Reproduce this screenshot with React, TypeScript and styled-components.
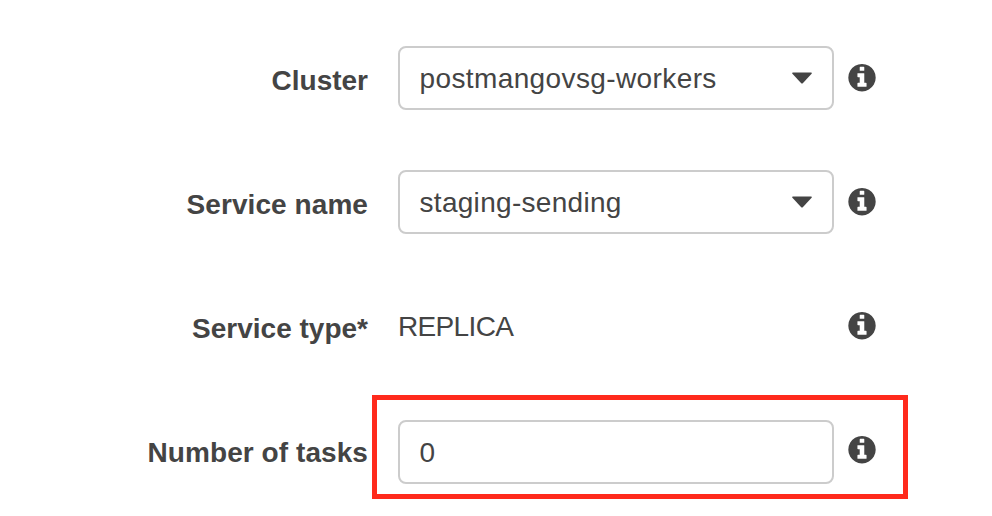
import React from "react";
import styled, { createGlobalStyle } from "styled-components";

const GlobalStyle = createGlobalStyle`
  *, *::before, *::after { box-sizing: border-box; }
  body { margin: 0; background: #fff; overflow: hidden; }
`;

const Form = styled.main`
  display: flex;
  flex-direction: column;
  gap: 60px;
  height: 516px;
  padding-top: 46px;
  color: #444;
  font: 28px/32px "Liberation Sans", Arial, sans-serif;
`;

const Row = styled.div`
  position: relative;
  display: grid;
  grid-template-columns: 368px 436px 28px;
  column-gap: 30px;
  align-items: center;
  height: 64px;
`;

const Label = styled.label<{ $tracking?: number }>`
  padding-top: 6px;
  text-align: right;
  font-weight: 700;
  white-space: nowrap;
  letter-spacing: ${(p) => p.$tracking ?? 0}px;
`;

const Field = styled.div<{ $drop?: number }>`
  display: flex;
  align-items: center;
  justify-content: space-between;
  height: 64px;
  margin: ${(p) => p.$drop ?? 0}px 0 -${(p) => p.$drop ?? 0}px;
  padding: 0 20px 0 19.5px;
  border: 2px solid #ccc;
  border-radius: 8px;
  background: #fff;
`;

const Value = styled.span<{ $tracking?: number }>`
  padding-top: 2px;
  white-space: nowrap;
  letter-spacing: ${(p) => p.$tracking ?? 0}px;
`;

const Caret = styled.svg`
  display: block;
  width: 20px;
  height: 12px;
  fill: #444;
`;

const Info = styled.svg`
  display: block;
  width: 28px;
  height: 28px;
  margin-left: -16px;
  fill: #444;
`;

const Highlight = styled.div`
  position: absolute;
  top: -23px;
  left: 372px;
  width: 536px;
  height: 104px;
  border: 5px solid #ff2a1c;
  pointer-events: none;
`;

const DownCaret = () => (
  <Caret viewBox="0 0 20 12">
    <path d="M1 .4H19Q20.4.5 19.6 1.8L11 11Q10 12 9 11L.4 1.8Q-.4.5 1 .4Z" />
  </Caret>
);

const InfoIcon = () => (
  <Info viewBox="-17 128 1570 1570" role="img" aria-label="Info">
    <path d="M1024 1376v-160q0-14-9-23t-23-9h-96v-512q0-14-9-23t-23-9h-320q-14 0-23 9t-9 23v160q0 14 9 23t23 9h96v320h-96q-14 0-23 9t-9 23v160q0 14 9 23t23 9h448q14 0 23-9t9-23zm-128-896v-160q0-14-9-23t-23-9h-192q-14 0-23 9t-9 23v160q0 14 9 23t23 9h192q14 0 23-9t9-23zm640 416q0 209-103 385.5t-279.5 279.5-385.5 103-385.5-103-279.5-279.5-103-385.5 103-385.5 279.5-279.5 385.5-103 385.5 103 279.5 279.5 103 385.5z" />
  </Info>
);

export default function App() {
  return (
    <>
      <GlobalStyle />
      <Form>
        <Row>
          <Label>Cluster</Label>
          <Field>
            <Value $tracking={0.39}>postmangovsg-workers</Value>
            <DownCaret />
          </Field>
          <InfoIcon />
        </Row>
        <Row>
          <Label $tracking={0.07}>Service name</Label>
          <Field>
            <Value $tracking={0.3}>staging-sending</Value>
            <DownCaret />
          </Field>
          <InfoIcon />
        </Row>
        <Row>
          <Label>Service type*</Label>
          <Value $tracking={-0.65}>REPLICA</Value>
          <InfoIcon />
        </Row>
        <Row>
          <Label $tracking={0.07}>Number of tasks</Label>
          <Field $drop={2}>
            <Value>0</Value>
          </Field>
          <InfoIcon />
          <Highlight />
        </Row>
      </Form>
    </>
  );
}
